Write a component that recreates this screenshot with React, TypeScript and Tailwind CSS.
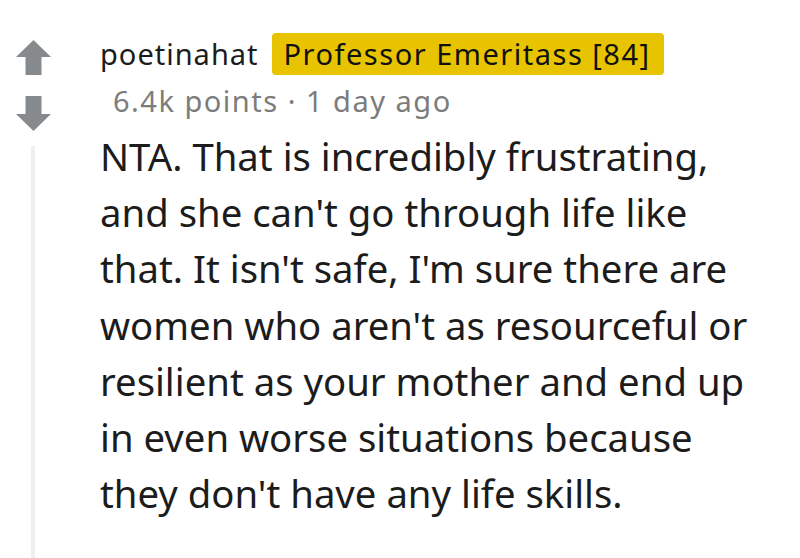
const BODY = [
  'NTA. That is incredibly frustrating,',
  "and she can't go through life like",
  "that. It isn't safe, I'm sure there are",
  "women who aren't as resourceful or",
  'resilient as your mother and end up',
  'in even worse situations because',
  "they don't have any life skills.",
];

function Arrow({ down }: { down?: boolean }) {
  return (
    <svg width="35" height="35" viewBox="0 0 35 35" className={down ? 'rotate-180' : ''}>
      <path d="M17.5 0 L35 17 H25.5 V35 H9.5 V17 H0 Z" fill="#878a8c" />
    </svg>
  );
}

export default function App() {
  return (
    <div className="h-[558px] w-[800px] overflow-hidden bg-white" style={{ fontFamily: '"Noto Sans", sans-serif' }}>
      <div className="flex">
        {/* Vote rail + thread line */}
        <div className="flex w-[100px] shrink-0 flex-col">
          <div className="ml-[16px] mt-[40px] flex flex-col gap-[21px]">
            <Arrow />
            <Arrow down />
          </div>
          <div className="ml-[31px] mt-[15px] h-[420px] w-[4px] bg-[#edeff1]" />
        </div>

        {/* Comment */}
        <div className="flex-1 pt-[33px]">
          <div className="flex items-center gap-[13px]">
            <span className="text-[29px] leading-[42px] tracking-[1px] text-[#1c1c1c]">poetinahat</span>
            <span className="rounded-[4px] bg-[#e8c300] pl-[12px] pr-[13px] text-[29px] leading-[42px] tracking-[1.5px] text-[#111]">
              Professor Emeritass [84]
            </span>
          </div>
          <div className="ml-[13px] mt-[6px] text-[29px] leading-[40px] tracking-[1.5px] text-[#7c7c7c]">
            6.4k points · 1 day ago
          </div>
          <p className="mt-[7px] text-[38.3px] leading-[56.2px] text-[#1c1c1c]">
            {BODY.map((line) => (
              <span key={line} className="block whitespace-nowrap">
                {line}
              </span>
            ))}
          </p>
        </div>
      </div>
    </div>
  );
}
